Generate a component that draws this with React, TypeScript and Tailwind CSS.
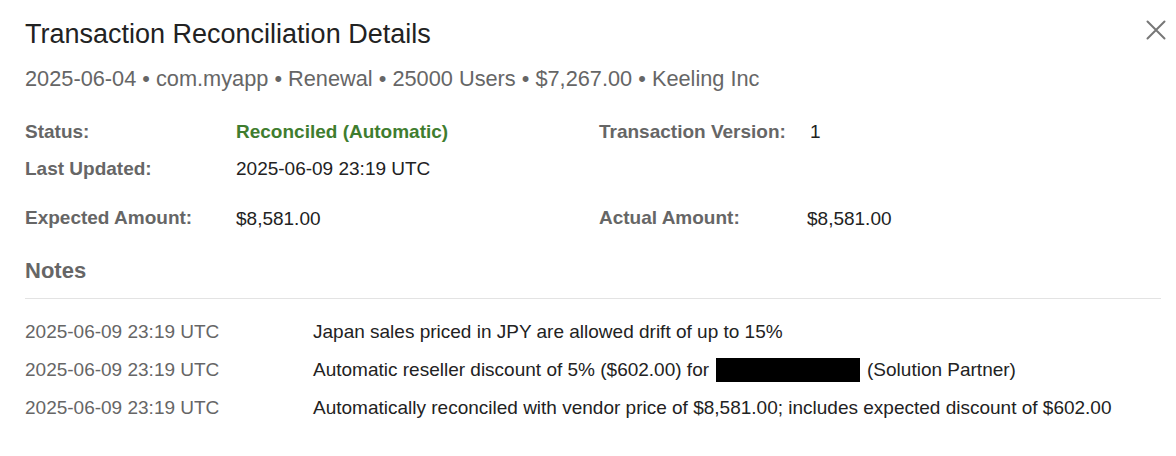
const NOTES = [
  { time: '2025-06-09 23:19 UTC', text: 'Japan sales priced in JPY are allowed drift of up to 15%' },
  { time: '2025-06-09 23:19 UTC', text: 'redacted' },
  {
    time: '2025-06-09 23:19 UTC',
    text: 'Automatically reconciled with vendor price of $8,581.00; includes expected discount of $602.00',
  },
];

export default function App() {
  return (
    <div className="w-[1176px] h-[456px] bg-white font-['Liberation_Sans',Arial,sans-serif] text-[#222] relative">
      <button className="absolute right-[10px] top-[20px] text-[#777]">
        <svg width="20" height="20" viewBox="0 0 20 20" fill="none" stroke="currentColor" strokeWidth="2" strokeLinecap="round">
          <path d="M1.5 1.5 L18.5 18.5 M18.5 1.5 L1.5 18.5" />
        </svg>
      </button>

      <div className="px-[25px] pt-[18px]">
        <h1 className="text-[27px] leading-[32px] text-[#222]">Transaction Reconciliation Details</h1>
        <div className="mt-[16px] text-[21.75px] leading-[26px] text-[#666]">
          2025-06-04 • com.myapp • Renewal • 25000 Users • $7,267.00 • Keeling Inc
        </div>

        <div className="mt-[27px] grid grid-cols-[211px_363px_211px_1fr] text-[19px] leading-[26px]">
          <div className="font-bold text-[#666]">Status:</div>
          <div className="font-bold text-[#3f7d2f]">Reconciled (Automatic)</div>
          <div className="font-bold text-[#666]">Transaction Version:</div>
          <div>1</div>

          <div className="mt-[11px] font-bold text-[#666]">Last Updated:</div>
          <div className="mt-[11px]">2025-06-09 23:19 UTC</div>
          <div className="mt-[11px]" />
          <div className="mt-[11px]" />

          <div className="mt-[23px] font-bold text-[#666]">Expected Amount:</div>
          <div className="mt-[24px]">$8,581.00</div>
          <div className="mt-[23px] font-bold text-[#666]">Actual Amount:</div>
          <div className="mt-[24px] -ml-[3px]">$8,581.00</div>
        </div>

        <div className="mt-[26px] text-[22px] leading-[26px] font-bold text-[#666]">Notes</div>
        <div className="mt-[14px] border-t border-[#e3e3e3] w-[1136px]" />

        <div className="mt-[20px] flex flex-col gap-[12px] text-[19px] leading-[26px]">
          {NOTES.map((n, i) => (
            <div key={i} className="flex">
              <div className="w-[288px] text-[#666]">{n.time}</div>
              <div className="text-[#222] whitespace-nowrap">
                {n.text === 'redacted' ? (
                  <span className="flex items-center">
                    Automatic reseller discount of 5% ($602.00) for
                    <span className="inline-block ml-[7px] mr-[7px] w-[144px] h-[24px] bg-black" />
                    (Solution Partner)
                  </span>
                ) : (
                  n.text
                )}
              </div>
            </div>
          ))}
        </div>
      </div>
    </div>
  );
}
